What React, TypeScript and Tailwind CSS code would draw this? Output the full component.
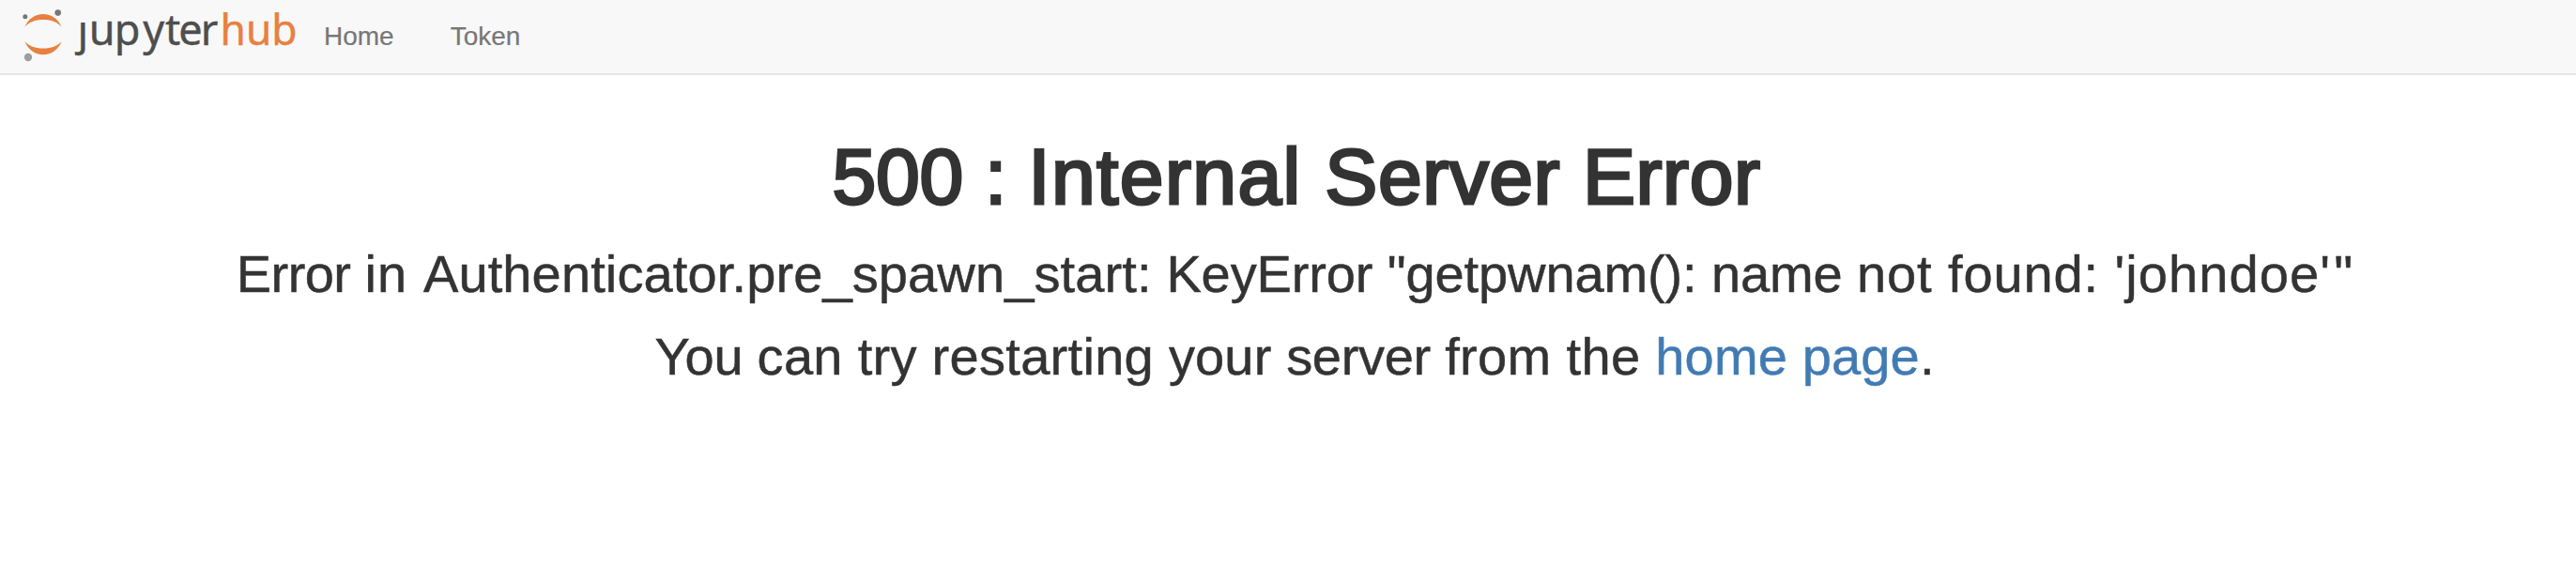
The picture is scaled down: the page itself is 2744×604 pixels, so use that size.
function Logo() {
  return (
    <svg className="block h-[78px] w-[320px]" viewBox="0 0 320 78" role="img" aria-label="jupyterhub">
      <defs>
        <clipPath id="below-dot">
          <rect x="70" y="24" width="165" height="50" />
        </clipPath>
      </defs>
      <g fill="#e8803f">
        <path d="M26.3 29C30 20 37.5 15 46 15s16 5 19.7 14C61.500 23.500 54.500 21 46 21s-15.500 2.500-19.700 8Z" />
        <path d="M26.3 44C30 53 37.5 58.300 46 58.300s16-5.300 19.700-14.300C61.500 49 54.500 51.500 46 51.500S30.500 49 26.300 44Z" />
      </g>
      <circle cx="26.8" cy="17.8" r="2.5" fill="#767677" />
      <circle cx="61.7" cy="13.6" r="3.3" fill="#767677" />
      <circle cx="30" cy="61" r="4.2" fill="#9e9e9e" />
      <g fontFamily="'Noto Sans', sans-serif" fontSize="45" strokeWidth="0.4">
        <g fill="#4e4e4e" stroke="#4e4e4e">
          <text x="82.500" y="48.200" clipPath="url(#below-dot)">j</text>
          <text x="94.700 121.700 152.200 176 190.200 213.800" y="48.200">upyter</text>
        </g>
        <text x="234.500" y="48.200" fill="#e8803f" stroke="#e8803f" textLength="82" lengthAdjust="spacingAndGlyphs">hub</text>
      </g>
    </svg>
  );
}

export default function App() {
  return (
    <div className="min-h-[604px] bg-white font-['Liberation_Sans',Arial,sans-serif] text-[#333]">
      <nav className="flex h-20 items-start border-b-2 border-[#e7e7e7] bg-[#f8f8f8] pt-0 text-[28px] leading-[40px] text-[#777] [-webkit-text-stroke:0.2px]">
        <Logo />
        <a href="#" className="ml-[25px] mt-[19px]">Home</a>
        <a href="#" className="ml-[60px] mt-[19px]">Token</a>
      </nav>
      <main className="flex flex-col items-center whitespace-nowrap pt-[62px] text-center">
        <h1 className="ml-[18px] text-[84px] leading-[92px] [-webkit-text-stroke:3px_#333]">
          <span className="tracking-[-0.23px]">500 : </span>
          <span className="tracking-[1.4px]">Internal </span>
          <span className="tracking-[0.54px]">Server </span>
          <span className="tracking-[0.6px]">Error</span>
        </h1>
        <p className="ml-[14px] mt-[18px] text-[56px] leading-[80px] [-webkit-text-stroke:0.5px]">
          <span className="tracking-[-0.55px]">Error </span>
          <span className="tracking-[1.1px]">in </span>
          <span className="tracking-[0.125px]">Authenticator.pre_spawn_start: </span>
          <span className="tracking-[-0.12px]">KeyError "getpwnam(): name </span>
          <span className="tracking-[0.9px]">not found: </span>
          <span className="tracking-[1.09px]">'johndoe</span>
          <span className="tracking-[4.4px]">'</span>"
        </p>
        <p className="ml-[14px] mt-[8px] text-[56px] leading-[80px] [-webkit-text-stroke:0.5px]">
          <span className="tracking-[-0.25px]">You </span>
          <span className="tracking-[0.3px]">can try restarting </span>
          <span className="tracking-[0.14px]">your </span>
          <span className="tracking-[-0.3px]">server </span>
          <span className="tracking-[0.35px]">from the </span>
          <a href="#" className="tracking-[0.15px] text-[#427bb3]">home page</a>.
        </p>
      </main>
    </div>
  );
}
